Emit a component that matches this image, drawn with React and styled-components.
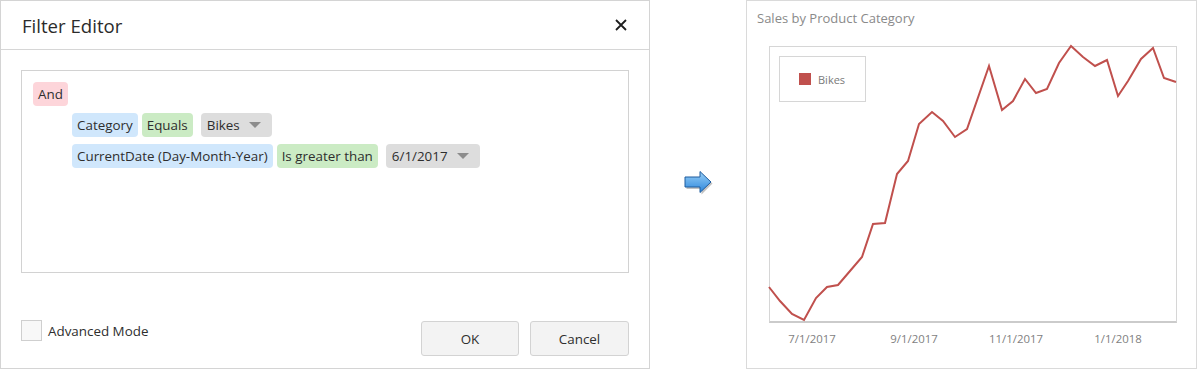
import React from 'react';
import styled, { createGlobalStyle } from 'styled-components';

const GlobalStyle = createGlobalStyle`
  html, body {
    margin: 0;
    padding: 0;
    background: #fff;
  }
  body {
    font-family: "Open Sans", "Noto Sans", sans-serif;
    color: #333;
  }
`;

const Page = styled.div`
  display: flex;
  width: 1199px;
  height: 369px;
`;

/* Filter editor dialog */

const Dialog = styled.div`
  box-sizing: border-box;
  width: 650px;
  height: 369px;
  border: 1px solid #d4d4d4;
  display: flex;
  flex-direction: column;
`;

const Header = styled.div`
  height: 48px;
  border-bottom: 1px solid #d6d6d6;
  display: flex;
  align-items: center;
  justify-content: space-between;
  padding: 0 21px 0 21px;
`;

const Title = styled.h1`
  margin: 0;
  font-size: 18.6px;
  font-weight: 400;
  color: #2b2b2b;
  padding-top: 1px;
`;

const CloseButton = styled.button`
  border: 0;
  background: none;
  padding: 0;
  width: 12px;
  height: 12px;
  display: flex;
  margin-right: 1px;
`;

const FilterBox = styled.div`
  box-sizing: border-box;
  margin: 20px 20px 0 20px;
  height: 203px;
  border: 1px solid #d2d2d2;
  padding: 11px 11px;
  display: flex;
  flex-direction: column;
  gap: 7px;
`;

const Row = styled.div`
  display: flex;
  gap: 4px;
  padding-left: ${(p) => p.$indent || 0}px;
`;

const chipColors = {
  group: '#fdd5da',
  field: '#d0e7fc',
  op: '#cbebc4',
  value: '#dddddd',
};

const Chip = styled.span`
  display: inline-flex;
  align-items: center;
  height: 24px;
  padding: 0 5px;
  border-radius: 4px;
  background: ${(p) => chipColors[p.$kind]};
  font-size: 13.4px;
  color: #2e2e2e;
  white-space: nowrap;
`;

const ValueChip = styled(Chip)`
  margin-left: 4px;
  padding: 0 11px 0 6px;
  gap: 9px;
`;

const Caret = styled.span`
  width: 0;
  height: 0;
  border-left: 6px solid transparent;
  border-right: 6px solid transparent;
  border-top: 6px solid #8c8c8c;
`;

const Footer = styled.div`
  display: flex;
  align-items: flex-start;
  justify-content: space-between;
  margin-top: 47px;
  padding: 0 20px 0 20px;
`;

const CheckLabel = styled.label`
  display: flex;
  align-items: center;
  gap: 6px;
  font-size: 13.4px;
  color: #2e2e2e;
`;

const CheckBox = styled.span`
  box-sizing: border-box;
  width: 21px;
  height: 21px;
  border: 1px solid #cfcfcf;
  background: #f8f8f8;
`;

const Buttons = styled.div`
  display: flex;
  gap: 11px;
  margin-top: 1px;
`;

const Button = styled.button`
  box-sizing: border-box;
  width: ${(p) => p.$width}px;
  height: 35px;
  border: 1px solid #d3d3d3;
  border-radius: 3px;
  background: #f3f3f3;
  font-family: inherit;
  font-size: 13.4px;
  color: #2e2e2e;
`;

/* Arrow between panels */

const ArrowColumn = styled.div`
  flex: 1;
  display: flex;
  align-items: center;
  justify-content: center;
  padding-bottom: 2px;
`;

/* Chart panel */

const ChartPanel = styled.div`
  box-sizing: border-box;
  width: 451px;
  height: 369px;
  margin-right: 2px;
  border: 1px solid #dadada;
  padding: 9px 0 0 10px;
`;

const ChartTitle = styled.div`
  font-size: 13px;
  line-height: 17px;
  color: #8a8a8a;
`;

const PlotFrame = styled.div`
  position: relative;
  box-sizing: border-box;
  width: 408px;
  height: 277px;
  margin: 19px 0 0 12px;
  border: 1px solid #d6d6d6;
  border-bottom: 2px solid #cbcbcb;
`;

const PlotSvg = styled.svg`
  position: absolute;
  left: 0;
  top: 0;
  overflow: visible;
`;

const Legend = styled.div`
  position: absolute;
  left: 9px;
  top: 9px;
  box-sizing: border-box;
  width: 87px;
  height: 46px;
  border: 1px solid #d6d6d6;
  background: #fff;
  display: flex;
  align-items: center;
  gap: 7px;
  padding-left: 19px;
  font-size: 11px;
  color: #7a7a7a;
`;

const Swatch = styled.span`
  width: 12px;
  height: 12px;
  background: #c0504d;
`;

const AxisLabels = styled.div`
  display: grid;
  grid-template-columns: repeat(4, 102px);
  margin: 8px 0 0 4px;
`;

const AxisLabel = styled.span`
  text-align: center;
  font-size: 11.4px;
  line-height: 16px;
  color: #7f7f7f;
`;

const sales = [
  [769, 286], [780, 300], [792, 313], [804, 319], [816, 297], [827, 286],
  [838, 284], [850, 270], [862, 256], [873, 223], [885, 222], [897, 173],
  [908, 160], [919, 123], [932, 111], [943, 120], [955, 136], [967, 128],
  [989, 65], [1002, 109], [1013, 100], [1025, 78], [1036, 92], [1047, 88],
  [1059, 62], [1071, 45], [1083, 56], [1095, 65], [1107, 59], [1118, 95],
  [1128, 80], [1141, 58], [1153, 47], [1164, 77], [1176, 81],
];

function CloseIcon() {
  return (
    <svg width="12" height="12" viewBox="0 0 12 12">
      <path d="M1 1 L11 11 M11 1 L1 11" stroke="#1e1e1e" strokeWidth="1.8" />
    </svg>
  );
}

function BlueArrow() {
  return (
    <svg width="31" height="27" viewBox="0 0 31 27">
      <defs>
        <linearGradient id="arrowFill" x1="0" y1="0" x2="0" y2="1">
          <stop offset="0" stopColor="#9ad0f7" />
          <stop offset="1" stopColor="#2c86dc" />
        </linearGradient>
      </defs>
      <path
        d="M3.5 8.5 H18.5 V3 L29.5 13.5 L18.5 24.5 V19 H3.5 Z"
        fill="#9a9a9a"
        opacity="0.6"
      />
      <path
        d="M2 7 H17 V1.5 L28 12 L17 22.5 V17 H2 Z"
        fill="url(#arrowFill)"
        stroke="#1f5c9e"
        strokeWidth="1"
      />
    </svg>
  );
}

function SalesChart() {
  const points = sales.map(([x, y]) => `${x - 770},${y - 46}`).join(' ');
  return (
    <>
      <PlotFrame>
        <PlotSvg width="406" height="274">
          <polyline
            points={points}
            fill="none"
            stroke="#c0504d"
            strokeWidth="2"
            strokeLinejoin="miter"
          />
        </PlotSvg>
        <Legend>
          <Swatch />
          Bikes
        </Legend>
      </PlotFrame>
      <AxisLabels>
        {['7/1/2017', '9/1/2017', '11/1/2017', '1/1/2018'].map((d) => (
          <AxisLabel key={d}>{d}</AxisLabel>
        ))}
      </AxisLabels>
    </>
  );
}

export default function App() {
  return (
    <Page>
      <GlobalStyle />
      <Dialog>
        <Header>
          <Title>Filter Editor</Title>
          <CloseButton aria-label="Close">
            <CloseIcon />
          </CloseButton>
        </Header>
        <FilterBox>
          <Row>
            <Chip $kind="group">And</Chip>
          </Row>
          <Row $indent={39}>
            <Chip $kind="field">Category</Chip>
            <Chip $kind="op">Equals</Chip>
            <ValueChip $kind="value">
              Bikes
              <Caret />
            </ValueChip>
          </Row>
          <Row $indent={39}>
            <Chip $kind="field">CurrentDate (Day-Month-Year)</Chip>
            <Chip $kind="op">Is greater than</Chip>
            <ValueChip $kind="value">
              6/1/2017
              <Caret />
            </ValueChip>
          </Row>
        </FilterBox>
        <Footer>
          <CheckLabel>
            <CheckBox />
            Advanced Mode
          </CheckLabel>
          <Buttons>
            <Button $width={98}>OK</Button>
            <Button $width={99}>Cancel</Button>
          </Buttons>
        </Footer>
      </Dialog>
      <ArrowColumn>
        <BlueArrow />
      </ArrowColumn>
      <ChartPanel>
        <ChartTitle>Sales by Product Category</ChartTitle>
        <SalesChart />
      </ChartPanel>
    </Page>
  );
}
